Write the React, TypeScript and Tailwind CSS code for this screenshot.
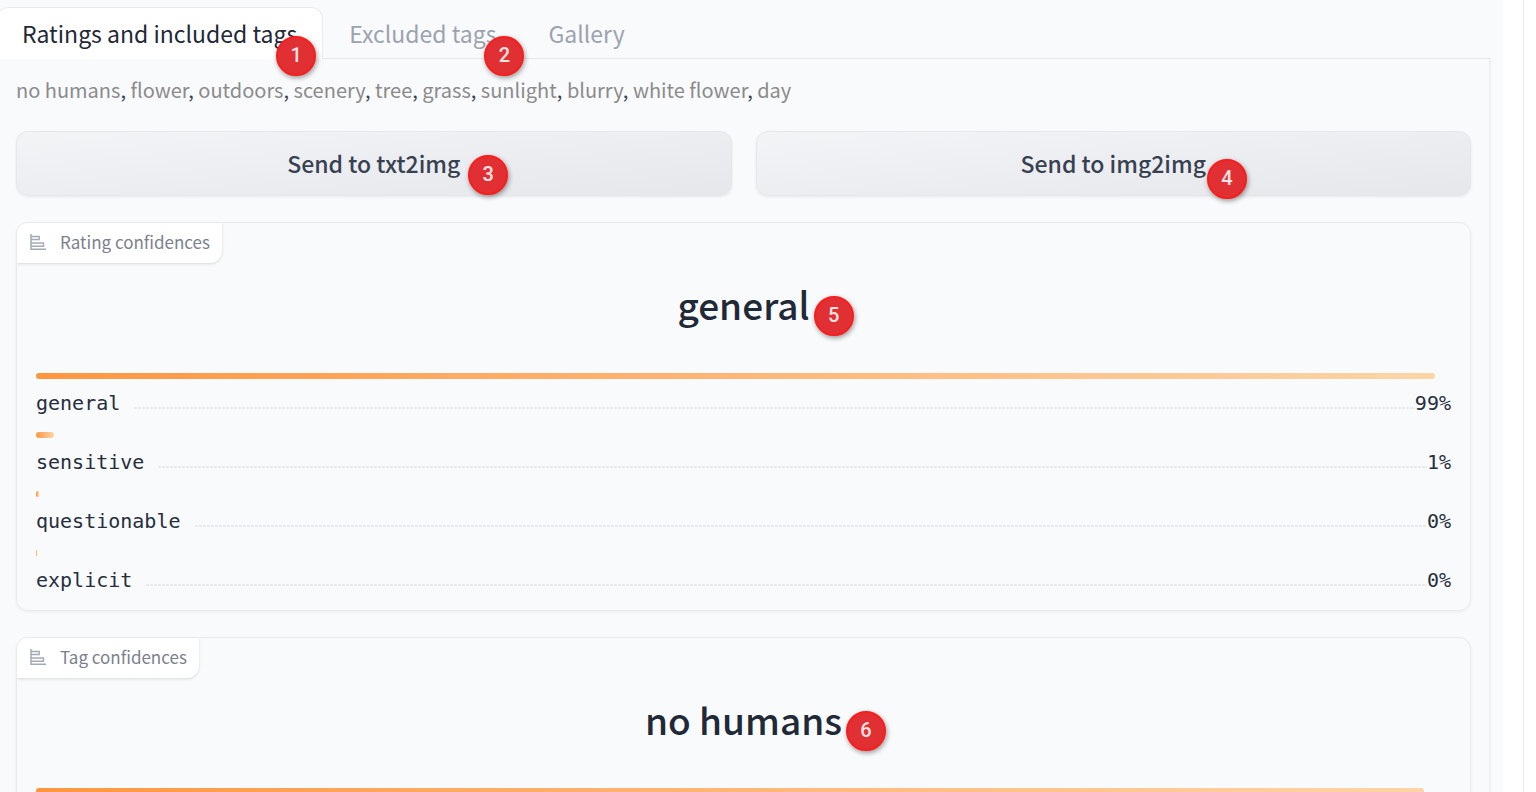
import React from 'react';

interface Confidence {
  label: string;
  percent: number;
  width: number;
}

interface ConfidenceCardProps {
  title: string;
  winner: string;
  step: number;
  items: Confidence[];
}

const TAGS = [
  'no humans',
  'flower',
  'outdoors',
  'scenery',
  'tree',
  'grass',
  'sunlight',
  'blurry',
  'white flower',
  'day',
];

const RATINGS: Confidence[] = [
  { label: 'general', percent: 99, width: 98.9 },
  { label: 'sensitive', percent: 1, width: 1.25 },
  { label: 'questionable', percent: 0, width: 0.2 },
  { label: 'explicit', percent: 0, width: 0.1 },
];

const TAG_CONFIDENCES: Confidence[] = [{ label: 'no humans', percent: 98, width: 98.1 }];

const Badge = ({ step, className }: { step: number; className: string }) => (
  <span
    className={`absolute z-10 flex size-10 items-center justify-center rounded-full border-2 border-[#fb1c1c] bg-[#e03033] pb-0.5 font-['Roboto',sans-serif] text-xl leading-none font-medium text-[#fbe3e3] shadow-[1px_2px_5px_rgba(0,0,0,0.4)] ${className}`}
  >
    {step}
  </span>
);

const ChartIcon = () => (
  <svg className="size-4 text-[#a3a9b5]" viewBox="0 0 16 16" fill="none" stroke="currentColor" aria-hidden="true">
    <path d="M1 0V15.3H16" strokeWidth={1.5} />
    <path d="M1 2.5H9.2V5.5H1M1 9H13.5V12.2H1" strokeWidth={1.4} />
  </svg>
);

const ConfidenceCard: React.FC<ConfidenceCardProps> = ({ title, winner, step, items }) => (
  <section className="overflow-hidden rounded-xl border border-[#e8eaed] shadow-[0_1px_3px_rgba(0,0,0,0.06)]">
    <div className="flex h-10 w-fit items-center gap-3.5 rounded-br-xl bg-white pr-3 pb-0.5 pl-[13px] text-[17px] text-[#7b818c] shadow-[0_1px_3px_rgba(0,0,0,0.14)]">
      <ChartIcon />
      {title}
    </div>
    <div className="px-[19px] pt-4 pb-3">
      <h2 className="mb-11 text-center text-[37px] leading-[50px] font-medium text-[#1f2937]">
        <span className="relative">
          {winner}
          <Badge step={step} className="top-[19px] left-full ml-1" />
        </span>
      </h2>
      <dl className="flex flex-col gap-[11px] font-['DejaVu_Sans_Mono',monospace] text-xl leading-9 text-[#262e3d]">
        {items.map(item => (
          <div key={item.label} className="flex flex-col gap-1.5">
            <div
              className="h-1.5 rounded-full bg-linear-to-r from-[#ff963f] to-[#fed4a6]"
              style={{ width: `${item.width}%` }}
            />
            <div className="flex items-center">
              <dt>{item.label}</dt>
              <div className="mt-2.5 ml-3.5 h-0.5 flex-1 bg-[repeating-linear-gradient(90deg,#e8eaed_0_3px,transparent_3px_4px)]" />
              <dd>{item.percent}%</dd>
            </div>
          </div>
        ))}
      </dl>
    </div>
  </section>
);

const App: React.FC = () => (
  <div className="flex h-screen overflow-hidden bg-white font-['Noto_Sans_CJK_SC',sans-serif]">
    <main className="min-w-0 flex-1 bg-[#f9fafc] pt-[7px] pr-3">
      <div role="tablist" className="flex h-[52px] text-[23px] leading-[50px]">
        <button
          role="tab"
          aria-selected="true"
          className="-ml-1 rounded-t-xl border border-b-0 border-[#e8eaed] bg-white px-[25px] pb-0.5 text-[#1f2937]"
        >
          <span className="relative block">
            Ratings and included tags
            <Badge step={1} className="top-7 -right-[19px]" />
          </span>
        </button>
        <div className="flex flex-1 gap-[52px] border-b border-[#e5e7eb] pl-[26px] text-[#9ca3af]">
          <button role="tab" aria-selected="false">
            <span className="relative block">
              Excluded tags
              <Badge step={2} className="top-7 -right-7" />
            </span>
          </button>
          <button role="tab" aria-selected="false">
            Gallery
          </button>
        </div>
      </div>

      <div role="tabpanel" className="flex h-full flex-col border-r-2 border-[#eff1f3] pt-[15px] pr-[18px] pl-4">
        <p className="mb-[25px] text-xl leading-8 text-[#374151]">
          {TAGS.map((tag, i) => (
            <React.Fragment key={tag}>
              {i > 0 && ', '}
              <a href="#" className="text-[#8b8b8b]">
                {tag}
              </a>
            </React.Fragment>
          ))}
        </p>

        <div className="mb-[26px] grid grid-cols-2 gap-6 text-[23px] font-medium text-[#374151]">
          <button className="h-[65px] rounded-xl border border-[#e5e7eb] bg-linear-to-br from-[#f3f4f6] to-[#e5e7eb] shadow-[0_1px_3px_rgba(0,0,0,0.08)]">
            <span className="relative">
              Send to txt2img
              <Badge step={3} className="top-[9px] left-full ml-2" />
            </span>
          </button>
          <button className="h-[65px] rounded-xl border border-[#e5e7eb] bg-linear-to-br from-[#f3f4f6] to-[#e5e7eb] shadow-[0_1px_3px_rgba(0,0,0,0.08)]">
            <span className="relative">
              Send to img2img
              <Badge step={4} className="top-[13px] left-full ml-px" />
            </span>
          </button>
        </div>

        <div className="flex flex-col gap-[26px]">
          <ConfidenceCard title="Rating confidences" winner="general" step={5} items={RATINGS} />
          <ConfidenceCard title="Tag confidences" winner="no humans" step={6} items={TAG_CONFIDENCES} />
        </div>
      </div>
    </main>
    <div className="w-5" />
    <div className="w-[13px] border-l border-[#e8eaed]" />
  </div>
);

export default App;
